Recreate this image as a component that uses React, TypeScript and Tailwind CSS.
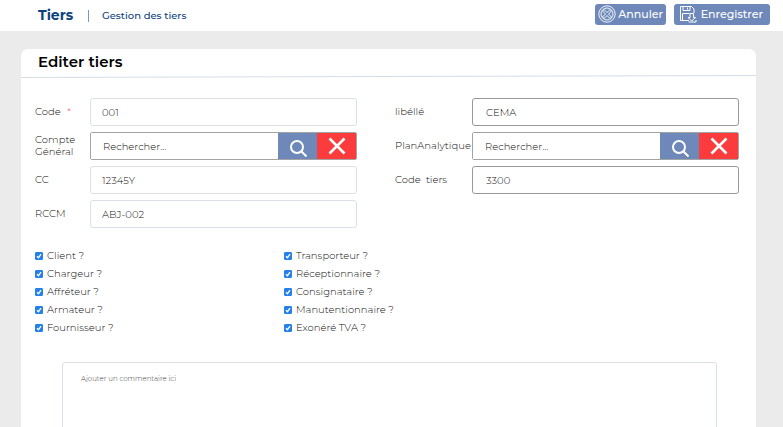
import { useState } from "react";
import type { ReactNode } from "react";

const leftChecks = ["Client ?", "Chargeur ?", "Affréteur ?", "Armateur ?", "Fournisseur ?"];
const rightChecks = ["Transporteur ?", "Réceptionnaire ?", "Consignataire ?", "Manutentionnaire ?", "Exonéré TVA ?"];

function CancelIcon() {
  return (
    <svg className="size-[18px]" viewBox="0 0 18 18" fill="none" stroke="#fff" strokeWidth="0.9" aria-hidden="true">
      <circle cx="9" cy="9" r="8.2" />
      <circle cx="9" cy="9" r="6" />
      <path d="M4.500 6 6 4.500l3 3 3-3L13.500 6l-3 3 3 3-1.500 1.500-3-3-3 3L4.500 12l3-3z" />
    </svg>
  );
}

function SaveIcon() {
  return (
    <svg className="size-[18px]" viewBox="0 0 18 18" fill="none" stroke="#fff" strokeWidth="1" aria-hidden="true">
      <path d="M10 15.500H1.500V1.500h11l2.500 2.500v4" />
      <path d="M4 1.500v4h7v-4M8.500 2.500v2M3.500 15.500v-7h7" />
      <path d="M11 8.500h3.500v4h2l-3.700 3.500L9 12.500h2z" />
      <path d="M9.500 17h7.500v-2" />
    </svg>
  );
}

function SearchIcon() {
  return (
    <svg className="size-[18px]" viewBox="0 0 18 18" fill="none" stroke="#fff" strokeWidth="2" aria-hidden="true">
      <circle cx="8" cy="8" r="6" />
      <path d="m12.200 12.200 5.300 5.300" />
    </svg>
  );
}

function ClearIcon() {
  return (
    <svg className="size-[18px]" viewBox="0 0 18 18" fill="none" stroke="#fff" strokeWidth="2.600" aria-hidden="true">
      <path d="m1.500 1.500 15 15m0-15-15 15" />
    </svg>
  );
}

function Field({ id, label, wide, children }: { id: string; label: ReactNode; wide?: boolean; children: ReactNode }) {
  return (
    <div className="flex h-7 items-center">
      <label htmlFor={id} className={`${wide ? "w-[77px]" : "w-[55px]"} shrink-0 leading-3`}>
        {label}
      </label>
      {children}
    </div>
  );
}

function TextInput({ id, value, dark }: { id: string; value: string; dark?: boolean }) {
  return (
    <input
      id={id}
      defaultValue={value}
      className={`h-7 w-full min-w-0 rounded-[3px] border bg-white pt-px outline-none ${dark ? "border-[#999] px-[13px]" : "border-[#d9e0eb] px-[11px]"}`}
    />
  );
}

function SearchInput({ id }: { id: string }) {
  return (
    <div className="flex h-7 min-w-0 flex-1 rounded-[2px] border border-[#a3a3a3]">
      <input
        id={id}
        placeholder="Rechercher..."
        className="w-full min-w-0 bg-white px-3 pt-px outline-none placeholder:text-[#111]"
      />
      <button type="button" aria-label="Rechercher" className="flex w-[39px] shrink-0 items-center justify-center bg-[#6e88b9] pt-1">
        <SearchIcon />
      </button>
      <button type="button" aria-label="Effacer" className="flex w-[39px] shrink-0 items-center justify-center bg-[#fb3b3c]">
        <ClearIcon />
      </button>
    </div>
  );
}

function Check({ label }: { label: string }) {
  const [on, setOn] = useState(true);
  return (
    <label className="flex items-center gap-1 leading-[18px]">
      <span className="grid size-2">
        <input
          type="checkbox"
          checked={on}
          onChange={() => setOn(!on)}
          className="col-start-1 row-start-1 size-2 appearance-none rounded-[1px] border border-[#2680eb] checked:bg-[#2680eb]"
        />
        {on && (
          <svg className="pointer-events-none col-start-1 row-start-1 size-2" viewBox="0 0 8 8" fill="none" stroke="#fff" strokeWidth="1.300" aria-hidden="true">
            <path d="m2 4.200 1.500 1.500L6 2.200" />
          </svg>
        )}
      </span>
      {label}
    </label>
  );
}

export default function App() {
  return (
    <div className="flex h-screen flex-col overflow-hidden bg-[#ebebeb] font-['Montserrat','Inter',sans-serif] text-[10px] font-light text-[#111]">
      <header className="flex h-[31px] shrink-0 items-center justify-between bg-white pr-[13px] pl-[38px]">
        <div className="flex items-center text-[#0b437d]">
          <h1 className="w-[50px] text-[14px] font-bold">Tiers</h1>
          <span className="h-3 w-px bg-[#7d9bbd]" />
          <span className="ml-[13px] font-medium">Gestion des tiers</span>
        </div>
        <div className="flex gap-2 pb-[3px] text-[11px] font-medium text-white">
          <button type="button" className="flex h-[21px] w-[71px] items-center justify-between rounded-[3px] bg-[#6e88b9] px-[3px]">
            <CancelIcon />
            Annuler
          </button>
          <button type="button" className="flex h-[21px] w-24 items-center justify-between rounded-[3px] bg-[#6e88b9] pr-[7px] pl-[5px]">
            <SaveIcon />
            Enregistrer
          </button>
        </div>
      </header>

      <main className="mt-[18px] mr-[27px] ml-[21px] flex-1 overflow-hidden rounded-t-[7px] bg-white">
        <h2 className="h-[26px] pl-[17px] text-[15px] leading-[26px] font-semibold text-black">Editer tiers</h2>
        <svg className="block h-[3px] w-full" viewBox="0 0 735 3" preserveAspectRatio="none" aria-hidden="true">
          <path d="M0 2.500 735 0.500" stroke="#d5dce9" />
        </svg>

        <form className="pt-5 pr-[17px] pl-[14px]">
          <div className="grid grid-cols-[322fr_344fr] gap-x-[38px]">
            <div className="flex flex-col gap-[6px]">
              <Field id="code" label={<>Code <span className="ml-1 text-[#f44]">*</span></>}>
                <TextInput id="code" value="001" />
              </Field>
              <Field id="compte" label="Compte Général">
                <SearchInput id="compte" />
              </Field>
              <Field id="cc" label="CC">
                <TextInput id="cc" value="12345Y" />
              </Field>
              <Field id="rccm" label="RCCM">
                <TextInput id="rccm" value="ABJ-002" />
              </Field>
            </div>
            <div className="flex flex-col gap-[6px]">
              <Field wide id="libelle" label="libéllé">
                <TextInput dark id="libelle" value="CEMA" />
              </Field>
              <Field wide id="plan" label="PlanAnalytique">
                <SearchInput id="plan" />
              </Field>
              <Field wide id="tiers" label={<>Code&nbsp; tiers</>}>
                <TextInput dark id="tiers" value="3300" />
              </Field>
            </div>
          </div>

          <div className="mt-[19px] grid grid-cols-[249fr_455fr]">
            <div>{leftChecks.map((c) => <Check key={c} label={c} />)}</div>
            <div>{rightChecks.map((c) => <Check key={c} label={c} />)}</div>
          </div>

          <div className="mt-[25px] pr-[22px] pl-[27px]">
            <textarea
              aria-label="Commentaire"
              placeholder="Ajouter un commentaire ici"
              className="block h-32 w-full resize-none rounded-[3px] border border-[#d9e0eb] px-[18px] py-[10px] text-[7px] leading-3 outline-none placeholder:text-[#444]"
            />
          </div>
        </form>
      </main>
    </div>
  );
}
